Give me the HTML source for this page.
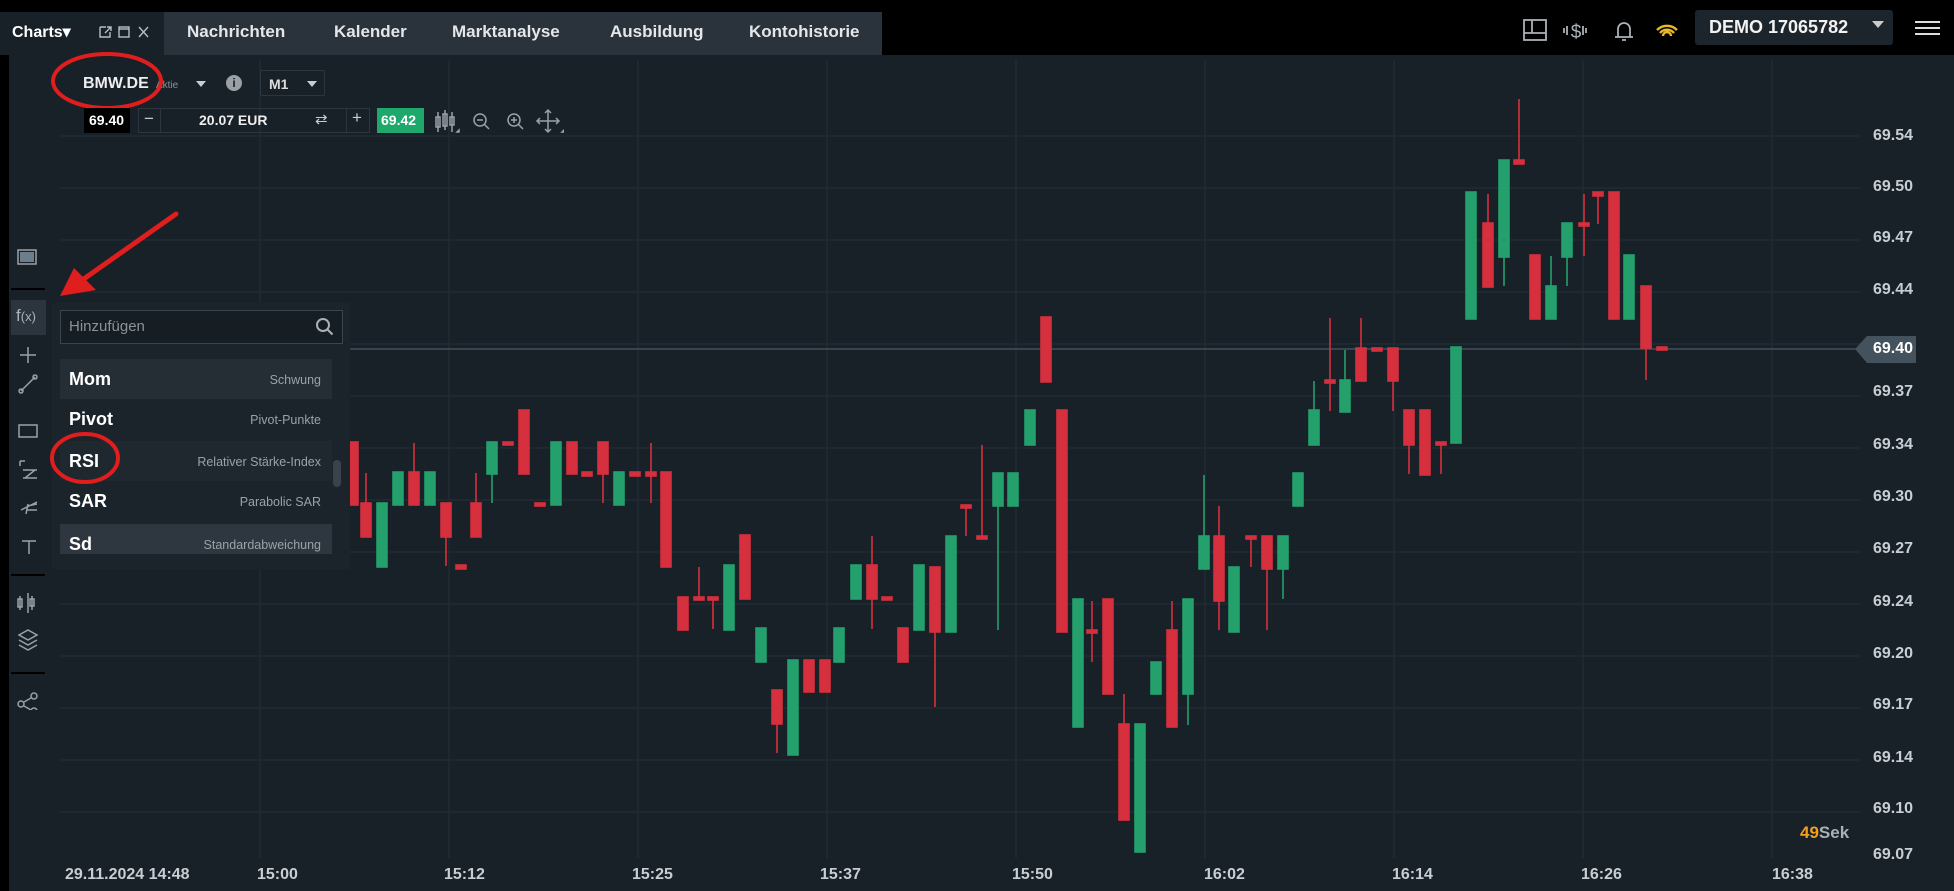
<!DOCTYPE html>
<html><head><meta charset="utf-8"><style>
*{margin:0;padding:0;box-sizing:border-box}
body{width:1954px;height:891px;overflow:hidden;background:#182028;font-family:"Liberation Sans",sans-serif;position:relative;color:#e6e6e6}
.a{position:absolute}
.tab{position:absolute;top:22px;font-size:17px;font-weight:bold;color:#e4e6e8}
.pl{position:absolute;left:1873px;font-size:16px;font-weight:bold;color:#c9ced2}
.tl{position:absolute;top:866px;font-size:16px;font-weight:bold;color:#c9ced2}
.row{position:absolute;left:60px;width:272px;height:40px}
.row b{position:absolute;left:9px;top:10px;font-size:18px;color:#fff}
.row span{position:absolute;right:11px;top:14px;font-size:12.5px;color:#9aa2a9}
</style></head><body>
<div class="a" style="left:0;top:0;width:1954px;height:55px;background:#000"></div>
<div class="a" style="left:0;top:12px;width:164px;height:43px;background:#182028"></div>
<div class="a" style="left:164px;top:12px;width:718px;height:43px;background:#2a333b"></div>
<div class="a" style="left:12px;top:22px;font-size:16px;font-weight:bold;color:#fff">Charts▾</div>
<svg class="a" style="left:98px;top:24px" width="60" height="16" viewBox="0 0 60 16" fill="none" stroke="#b8bec3" stroke-width="1.4">
<path d="M2 3h6M2 3v10h10V8M7 9l6-6M9 3h4v4"/><rect x="21" y="3" width="10" height="10"/><path d="M21 5h10"/><path d="M41 3l9 10M50 3l-9 10"/></svg>
<div class="tab" style="left:187px">Nachrichten</div>
<div class="tab" style="left:334px">Kalender</div>
<div class="tab" style="left:452px">Marktanalyse</div>
<div class="tab" style="left:610px">Ausbildung</div>
<div class="tab" style="left:749px">Kontohistorie</div>
<svg class="a" style="left:1520px;top:18px" width="170" height="26" viewBox="0 0 170 26" fill="none" stroke="#aab1b7" stroke-width="1.8">
<rect x="4" y="2" width="22" height="20"/><path d="M4 15h22M12 2v13"/>
<text x="56" y="20" font-size="19" fill="#aab1b7" stroke="none" text-anchor="middle" font-family="Liberation Sans">$</text><path d="M44 10v5M47 8v9M66 10v5M63 8v9"/>
<path d="M95 19h18M98 19v-8a6 6 0 0 1 12 0v8M102 22h4"/>
<g stroke="#e9b92a" stroke-width="2.4"><path d="M137 12a14 14 0 0 1 20 0M140 15a9 9 0 0 1 14 0M143 18a4 4 0 0 1 8 0"/></g></svg>
<div class="a" style="left:1695px;top:10px;width:198px;height:35px;background:#1d252c;border-radius:3px"></div>
<div class="a" style="left:1709px;top:17px;font-size:18px;font-weight:bold;color:#f2f2f2">DEMO <span style="font-weight:bold">17065782</span></div>
<div class="a" style="left:1872px;top:21px;width:0;height:0;border-left:6px solid transparent;border-right:6px solid transparent;border-top:7px solid #ccc"></div>
<div class="a" style="left:1915px;top:21px;width:25px;height:2px;background:#ddd;box-shadow:0 6px 0 #ddd,0 12px 0 #ddd"></div>

<svg class="a" style="left:0;top:55px" width="1954" height="836" viewBox="0 55 1954 836">
<rect x="0" y="55" width="9" height="836" fill="#000"/>
<g stroke="#232c34" stroke-width="1.3">
<path d="M60 136H1860M60 188H1860M60 240H1860M60 292H1860M60 344H1860M60 396H1860M60 448H1860M60 500H1860M60 552H1860M60 604H1860M60 656H1860M60 708H1860M60 760H1860M60 812H1860"/>
<path d="M260 60V858M449 60V858M638 60V858M827 60V858M1016 60V858M1205 60V858M1394 60V858M1583 60V858M1772 60V858"/>
</g>
<path d="M60 349H1860" stroke="#4a5864" stroke-width="1.3"/>
</svg>
<svg class="a" style="left:0;top:0" width="1954" height="891" viewBox="0 0 1954 891">
<g stroke-width="1.6">
<g stroke="#d62f3d" fill="#d62f3d">
<rect x="348" y="442" width="10" height="63"/>
<line x1="366" y1="473" x2="366" y2="537"/><rect x="361" y="503" width="10" height="34"/>
<line x1="414" y1="443" x2="414" y2="505"/><rect x="409" y="472" width="10" height="33"/>
<line x1="446" y1="503" x2="446" y2="566"/><rect x="441" y="503" width="10" height="34"/>
<rect x="456" y="565" width="10" height="4"/>
<line x1="476" y1="473" x2="476" y2="537"/><rect x="471" y="503" width="10" height="34"/>
<rect x="503" y="442" width="10" height="3"/>
<rect x="519" y="410" width="10" height="64"/>
<rect x="535" y="503" width="10" height="3"/>
<rect x="567" y="442" width="10" height="32"/>
<rect x="582" y="472" width="10" height="4"/>
<line x1="603" y1="442" x2="603" y2="503"/><rect x="598" y="442" width="10" height="32"/>
<rect x="630" y="472" width="10" height="4"/>
<line x1="651" y1="443" x2="651" y2="503"/><rect x="646" y="472" width="10" height="4"/>
<rect x="661" y="472" width="10" height="95"/>
<rect x="678" y="597" width="10" height="33"/>
<line x1="699" y1="567" x2="699" y2="600"/><rect x="694" y="597" width="10" height="3"/>
<line x1="713" y1="597" x2="713" y2="629"/><rect x="708" y="597" width="10" height="3"/>
<rect x="740" y="535" width="10" height="64"/>
<line x1="777" y1="690" x2="777" y2="753"/><rect x="772" y="690" width="10" height="34"/>
<rect x="804" y="660" width="10" height="32"/>
<rect x="820" y="660" width="10" height="32"/>
<line x1="872" y1="536" x2="872" y2="629"/><rect x="867" y="565" width="10" height="34"/>
<rect x="882" y="597" width="10" height="3"/>
<rect x="898" y="628" width="10" height="34"/>
<line x1="935" y1="567" x2="935" y2="707"/><rect x="930" y="567" width="10" height="65"/>
<line x1="966" y1="505" x2="966" y2="536"/><rect x="961" y="505" width="10" height="3"/>
<line x1="982" y1="445" x2="982" y2="539"/><rect x="977" y="536" width="10" height="3"/>
<rect x="1041" y="317" width="10" height="65"/>
<rect x="1057" y="410" width="10" height="222"/>
<line x1="1092" y1="601" x2="1092" y2="662"/><rect x="1087" y="630" width="10" height="3"/>
<rect x="1103" y="599" width="10" height="95"/>
<line x1="1124" y1="694" x2="1124" y2="820"/><rect x="1119" y="724" width="10" height="96"/>
<line x1="1172" y1="601" x2="1172" y2="727"/><rect x="1167" y="630" width="10" height="97"/>
<line x1="1219" y1="506" x2="1219" y2="630"/><rect x="1214" y="536" width="10" height="65"/>
<line x1="1251" y1="536" x2="1251" y2="567"/><rect x="1246" y="536" width="10" height="3"/>
<line x1="1267" y1="536" x2="1267" y2="630"/><rect x="1262" y="536" width="10" height="33"/>
<line x1="1330" y1="318" x2="1330" y2="411"/><rect x="1325" y="380" width="10" height="3"/>
<line x1="1361" y1="318" x2="1361" y2="381"/><rect x="1356" y="348" width="10" height="33"/>
<rect x="1372" y="348" width="10" height="3"/>
<line x1="1393" y1="348" x2="1393" y2="411"/><rect x="1388" y="348" width="10" height="33"/>
<line x1="1409" y1="410" x2="1409" y2="474"/><rect x="1404" y="410" width="10" height="35"/>
<rect x="1420" y="410" width="10" height="65"/>
<line x1="1441" y1="442" x2="1441" y2="474"/><rect x="1436" y="442" width="10" height="3"/>
<line x1="1488" y1="194" x2="1488" y2="287"/><rect x="1483" y="223" width="10" height="64"/>
<line x1="1519" y1="99" x2="1519" y2="164"/><rect x="1514" y="160" width="10" height="4"/>
<rect x="1530" y="255" width="10" height="64"/>
<line x1="1584" y1="194" x2="1584" y2="256"/><rect x="1579" y="223" width="10" height="3"/>
<line x1="1598" y1="192" x2="1598" y2="224"/><rect x="1593" y="192" width="10" height="4"/>
<rect x="1609" y="192" width="10" height="127"/>
<line x1="1646" y1="286" x2="1646" y2="380"/><rect x="1641" y="286" width="10" height="62"/>
<rect x="1657" y="347" width="10" height="3"/>
</g>
<g stroke="#23a06c" fill="#23a06c">
<rect x="377" y="503" width="10" height="64"/>
<rect x="393" y="472" width="10" height="33"/>
<rect x="425" y="472" width="10" height="33"/>
<line x1="492" y1="442" x2="492" y2="503"/><rect x="487" y="442" width="10" height="32"/>
<rect x="551" y="442" width="10" height="63"/>
<rect x="614" y="472" width="10" height="33"/>
<rect x="724" y="565" width="10" height="65"/>
<rect x="756" y="628" width="10" height="34"/>
<rect x="788" y="660" width="10" height="95"/>
<rect x="834" y="628" width="10" height="34"/>
<rect x="851" y="565" width="10" height="34"/>
<rect x="914" y="565" width="10" height="65"/>
<rect x="946" y="536" width="10" height="96"/>
<line x1="998" y1="473" x2="998" y2="630"/><rect x="993" y="473" width="10" height="33"/>
<rect x="1008" y="473" width="10" height="33"/>
<rect x="1025" y="410" width="10" height="35"/>
<rect x="1073" y="599" width="10" height="128"/>
<rect x="1135" y="724" width="10" height="128"/>
<rect x="1151" y="662" width="10" height="32"/>
<line x1="1188" y1="599" x2="1188" y2="725"/><rect x="1183" y="599" width="10" height="95"/>
<line x1="1204" y1="475" x2="1204" y2="569"/><rect x="1199" y="536" width="10" height="33"/>
<rect x="1229" y="567" width="10" height="65"/>
<line x1="1283" y1="536" x2="1283" y2="599"/><rect x="1278" y="536" width="10" height="33"/>
<rect x="1293" y="473" width="10" height="33"/>
<line x1="1314" y1="381" x2="1314" y2="445"/><rect x="1309" y="410" width="10" height="35"/>
<line x1="1345" y1="350" x2="1345" y2="412"/><rect x="1340" y="380" width="10" height="32"/>
<rect x="1451" y="347" width="10" height="96"/>
<rect x="1466" y="192" width="10" height="127"/>
<line x1="1504" y1="160" x2="1504" y2="286"/><rect x="1499" y="160" width="10" height="97"/>
<line x1="1551" y1="256" x2="1551" y2="319"/><rect x="1546" y="286" width="10" height="33"/>
<line x1="1567" y1="223" x2="1567" y2="286"/><rect x="1562" y="223" width="10" height="34"/>
<rect x="1624" y="255" width="10" height="64"/>
</g></g>
<path d="M1855 349l12-13h49v27h-49z" fill="#44525d"/>
<path d="M176 214L78 283" stroke="#e01e1e" stroke-width="5" stroke-linecap="round"/>
<path d="M60 296l36-6-22-22z" fill="#e01e1e"/>
</svg>

<div class="pl" style="top:127px">69.54</div>
<div class="pl" style="top:178px">69.50</div>
<div class="pl" style="top:229px">69.47</div>
<div class="pl" style="top:281px">69.44</div>
<div class="pl" style="top:340px;color:#fff">69.40</div>
<div class="pl" style="top:383px">69.37</div>
<div class="pl" style="top:436px">69.34</div>
<div class="pl" style="top:488px">69.30</div>
<div class="pl" style="top:540px">69.27</div>
<div class="pl" style="top:593px">69.24</div>
<div class="pl" style="top:645px">69.20</div>
<div class="pl" style="top:696px">69.17</div>
<div class="pl" style="top:749px">69.14</div>
<div class="pl" style="top:800px">69.10</div>
<div class="pl" style="top:846px">69.07</div>
<div class="a" style="left:1800px;top:823px;font-size:17px;font-weight:bold;color:#aab0b5"><span style="color:#f0a020">49</span>Sek</div>

<div class="tl" style="left:65px">29.11.2024 14:48</div>
<div class="tl" style="left:257px">15:00</div>
<div class="tl" style="left:444px">15:12</div>
<div class="tl" style="left:632px">15:25</div>
<div class="tl" style="left:820px">15:37</div>
<div class="tl" style="left:1012px">15:50</div>
<div class="tl" style="left:1204px">16:02</div>
<div class="tl" style="left:1392px">16:14</div>
<div class="tl" style="left:1581px">16:26</div>
<div class="tl" style="left:1772px">16:38</div>

<div class="a" style="left:83px;top:75px;font-size:16px;font-weight:bold;color:#eee">BMW.DE</div>
<div class="a" style="left:156px;top:80px;font-size:10px;color:#8a9299">Aktie</div>
<div class="a" style="left:196px;top:81px;border-left:5px solid transparent;border-right:5px solid transparent;border-top:6px solid #ccc"></div>
<div class="a" style="left:226px;top:75px;width:16px;height:16px;border-radius:50%;background:#9aa0a5;color:#182028;font-size:12px;font-weight:bold;text-align:center;line-height:16px">i</div>
<div class="a" style="left:260px;top:70px;width:65px;height:26px;border:1px solid #2d363e;border-radius:2px"></div>
<div class="a" style="left:269px;top:76px;font-size:14px;font-weight:bold;color:#ddd">M1</div>
<div class="a" style="left:307px;top:81px;border-left:5px solid transparent;border-right:5px solid transparent;border-top:6px solid #ccc"></div>
<svg class="a" style="left:50px;top:50px" width="116" height="62"><ellipse cx="57" cy="31" rx="54" ry="27" fill="none" stroke="#e01e1e" stroke-width="4"/></svg>

<div class="a" style="left:84px;top:108px;width:46px;height:25px;background:#000"></div>
<div class="a" style="left:89px;top:112px;font-size:14px;font-weight:bold;color:#fff">69.40</div>
<div class="a" style="left:138px;top:108px;width:232px;height:25px;border:1px solid #2d363e"></div>
<div class="a" style="left:160px;top:108px;width:1px;height:25px;background:#2d363e"></div>
<div class="a" style="left:346px;top:108px;width:1px;height:25px;background:#2d363e"></div>
<div class="a" style="left:144px;top:109px;font-size:17px;color:#ccc">−</div>
<div class="a" style="left:199px;top:112px;font-size:14px;font-weight:bold;color:#eee">20.07 EUR</div>
<div class="a" style="left:315px;top:110px;font-size:15px;color:#ccc">⇄</div>
<div class="a" style="left:352px;top:108px;font-size:17px;color:#ccc">+</div>
<div class="a" style="left:377px;top:108px;width:47px;height:25px;background:#1fa86c"></div>
<div class="a" style="left:381px;top:112px;font-size:14px;font-weight:bold;color:#fff">69.42</div>
<svg class="a" style="left:434px;top:108px" width="130" height="28" fill="none" stroke="#9aa1a7" stroke-width="1.5">
<path d="M4 4v20M2 9h4v10H2zM11 2v20M9 6h4v12H9zM18 4v20M16 9h4v8h-4z"/><path d="M23 24l2-2v2z" fill="#9aa1a7"/>
<circle cx="46" cy="12" r="6"/><path d="M50 16l5 5M43 12h6"/>
<circle cx="80" cy="12" r="6"/><path d="M84 16l5 5M77 12h6M80 9v6"/>
<path d="M114 2v22M103 13h22M111 5l3-3 3 3M111 21l3 3 3-3M106 10l-3 3 3 3M122 10l3 3-3 3"/><path d="M128 24l2-2v2z" fill="#9aa1a7"/></svg>

<div class="a" style="left:11px;top:288px;width:34px;height:1.5px;background:#000"></div>
<div class="a" style="left:11px;top:574px;width:34px;height:1.5px;background:#000"></div>
<div class="a" style="left:11px;top:672px;width:34px;height:1.5px;background:#000"></div>
<div class="a" style="left:11px;top:300px;width:35px;height:35px;background:#2c353d"></div>
<div class="a" style="left:16px;top:306px;font-size:17px;color:#aab1b7">f<span style="font-size:13px">(x)</span></div>
<svg class="a" style="left:11px;top:240px" width="36" height="470" fill="none" stroke="#9aa1a7" stroke-width="1.5">
<rect x="7" y="10" width="18" height="14"/><rect x="9" y="12" width="14" height="10" fill="#6c7e8c" stroke="none"/>
<path d="M17 107v16M9 115h16"/>
<path d="M10 151l14-14"/><circle cx="10" cy="151" r="2"/><circle cx="24" cy="137" r="2"/>
<rect x="8" y="185" width="18" height="12"/>
<path d="M9 221h5M9 221v5M12 230h14M12 238h14M24 230l-10 8"/>
<path d="M10 270l16-8M16 266l10-2M16 270l10 0M17 264l-2 10"/>
<path d="M11 301h14M18 301v13"/>
<path d="M9 356v14M7 359h4v8H7zM17 353v20M21 356v14M19 359h4v7h-4z"/>
<path d="M8 395l9-5 9 5-9 5zM8 400l9 5 9-5M8 405l9 5 9-5"/>
<circle cx="10" cy="464" r="3"/><circle cx="23" cy="456" r="3"/><circle cx="23" cy="471" r="3"/><path d="M13 462l7-4M13 466l7 4"/>
<g fill="#9aa1a7" stroke="none"><path d="M41 32l3-3v3zM41 208l3-3v3zM41 246l3-3v3zM41 284l3-3v3zM41 322l3-3v3zM41 420l3-3v3z"/></g>
</svg>

<div class="a" style="left:52px;top:303px;width:298px;height:266px;background:#1c242b"></div>
<div class="a" style="left:60px;top:310px;width:283px;height:34px;border:1px solid #3a444d;background:#161d23"></div>
<div class="a" style="left:69px;top:318px;font-size:15px;color:#8a939a">Hinzufügen</div>
<svg class="a" style="left:314px;top:316px" width="22" height="22" fill="none" stroke="#aab1b7" stroke-width="2"><circle cx="9" cy="9" r="6"/><path d="M13.5 13.5l5 5"/></svg>
<div class="row" style="top:359px;background:#262e35"><b>Mom</b><span>Schwung</span></div>
<div class="row" style="top:399px"><b>Pivot</b><span>Pivot-Punkte</span></div>
<div class="row" style="top:441px;background:#20282f"><b>RSI</b><span>Relativer Stärke-Index</span></div>
<div class="row" style="top:481px"><b>SAR</b><span>Parabolic SAR</span></div>
<div class="row" style="top:524px;height:30px;background:#2e373f;overflow:hidden"><b>Sd</b><span>Standardabweichung</span></div>
<div class="a" style="left:333px;top:460px;width:8px;height:27px;border-radius:4px;background:#3a434b"></div>
<svg class="a" style="left:48px;top:430px" width="74" height="56"><ellipse cx="37" cy="28" rx="33" ry="24" fill="none" stroke="#e01e1e" stroke-width="4"/></svg>
</body></html>
